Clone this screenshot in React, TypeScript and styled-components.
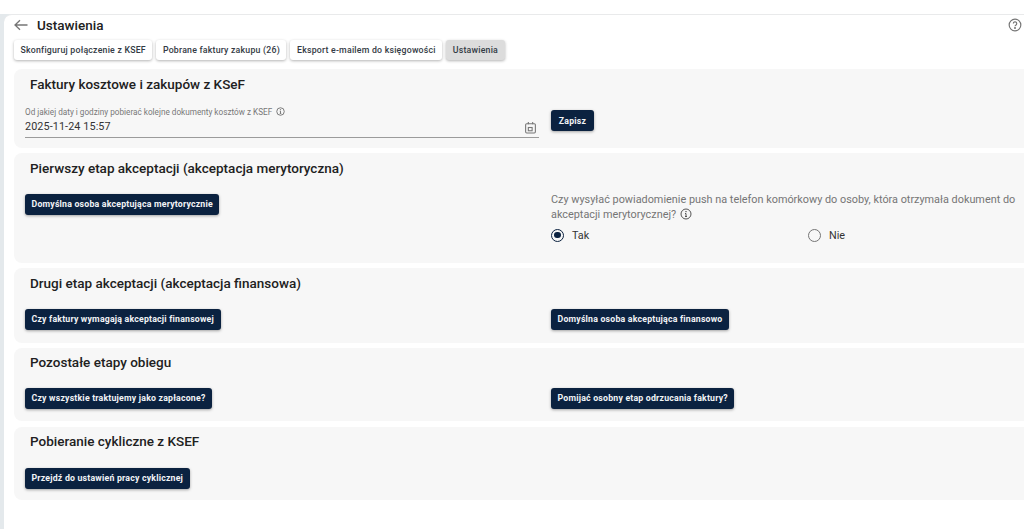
import React from "react";
import styled, { createGlobalStyle } from "styled-components";

const Global = createGlobalStyle`
  html, body { margin: 0; padding: 0; background: #fff; }
  body { font-family: Roboto, "Liberation Sans", sans-serif; color: #212121; overflow: hidden; }
`;
const Page = styled.div`
  height: 529px;
  padding-top: 14px;
  box-sizing: border-box;
  background: #fff;
  overflow: hidden;
`;
const Frame = styled.div`
  height: 515px;
  background: #e4e9ec;
  display: flex;
`;
const Main = styled.main`
  flex: 1;
  margin-left: 4px;
  background: #fff;
  border-top: 1px solid #e9eaeb;
  border-top-left-radius: 8px;
  padding-left: 10px;
  min-width: 0;
`;
const TitleRow = styled.div`
  height: 20px;
  display: flex;
  align-items: center;
  padding-right: 2px;
`;
const BackIcon = styled.svg`
  width: 14px;
  height: 14px;
  margin-right: 9px;
  color: #757575;
`;
const Title = styled.h1`
  flex: 1;
  margin: 0;
  font-size: 13.5px;
  font-weight: 500;
  color: #212121;
`;
const HelpIcon = styled.svg`
  width: 14px;
  height: 14px;
  color: #757575;
`;
const Tabs = styled.div`
  display: flex;
  gap: 4px;
  margin-top: 5px;
  height: 20px;
`;
const Tab = styled.div<{ $active?: boolean }>`
  height: 20px;
  padding: 0 6.5px;
  display: flex;
  align-items: center;
  border-radius: 3px;
  background: ${(p) => (p.$active ? "#dcdcdc" : "#fff")};
  box-shadow: 0 1px 3px rgba(0, 0, 0, 0.3);
  font-size: 8.75px;
  font-weight: 500;
  letter-spacing: 0.22px;
  color: #333a44;
  white-space: nowrap;
`;
const Sections = styled.div`
  margin-top: 9px;
  display: flex;
  flex-direction: column;
`;
const Card = styled.section<{ $h: number; $gap?: number; $pt?: number }>`
  height: ${(p) => p.$h}px;
  margin-bottom: ${(p) => p.$gap ?? 5}px;
  box-sizing: border-box;
  background: #f7f7f7;
  border-radius: 8px 0 0 8px;
  padding: ${(p) => p.$pt ?? 7}px 0 0 11px;
`;
const CardTitle = styled.h2`
  margin: 0 0 0 5px;
  font-size: 13.5px;
  line-height: 16px;
  font-weight: 500;
  color: #212121;
`;
const Columns = styled.div<{ $mt: number }>`
  display: grid;
  grid-template-columns: 526px 1fr;
  margin-top: ${(p) => p.$mt}px;
`;
const Button = styled.button`
  display: inline-flex;
  align-items: center;
  justify-content: center;
  height: 21px;
  min-width: 43px;
  padding: 0 6.5px;
  border: 0;
  border-radius: 3px;
  background: #0b2240;
  color: #f2f4f7;
  font-family: inherit;
  font-size: 8.75px;
  font-weight: 700;
  letter-spacing: 0.2px;
  white-space: nowrap;
  box-shadow: 0 1px 3px rgba(0, 0, 0, 0.35);
`;
const DateRow = styled.div`
  display: flex;
  align-items: flex-start;
  margin-top: 13px;
`;
const Field = styled.div`
  width: 514px;
  margin-right: 12px;
  height: 32px;
  border-bottom: 1px solid #9b9b9b;
  position: relative;
`;
const FieldLabel = styled.div`
  display: flex;
  align-items: center;
  gap: 3px;
  height: 13px;
  font-size: 8.2px;
  color: #777;
`;
const FieldValue = styled.div`
  font-size: 10.8px;
  line-height: 14px;
  color: #333;
  margin-top: 2px;
  letter-spacing: 0.1px;
`;
const CalendarIcon = styled.svg`
  position: absolute;
  right: 2px;
  bottom: 3px;
  width: 13px;
  height: 13px;
  color: #777;
`;
const SaveWrap = styled.div`
  display: flex;
  margin-top: 5px;
`;
const InfoIcon = styled.svg<{ $s: number }>`
  width: ${(p) => p.$s}px;
  height: ${(p) => p.$s}px;
  color: #555;
  vertical-align: -2px;
  margin-left: 1px;
`;
const Question = styled.div`
  font-size: 10.86px;
  line-height: 15px;
  color: #757575;
  width: 472px;
`;
const Radios = styled.div`
  display: grid;
  grid-template-columns: 257px 1fr;
  margin-top: 5px;
`;
const RadioItem = styled.label`
  display: flex;
  align-items: center;
  gap: 8px;
  font-size: 10.8px;
  color: #333;
  height: 16px;
`;
const RadioCircle = styled.span<{ $on?: boolean }>`
  width: 13px;
  height: 13px;
  box-sizing: border-box;
  border-radius: 50%;
  border: 1.5px solid ${(p) => (p.$on ? "#0b2240" : "#757575")};
  display: flex;
  align-items: center;
  justify-content: center;
  &::after {
    content: "";
    display: ${(p) => (p.$on ? "block" : "none")};
    width: 6.5px;
    height: 6.5px;
    border-radius: 50%;
    background: #0b2240;
  }
`;

const Info = ({ s }: { s: number }) => (
  <InfoIcon $s={s} viewBox="0 0 24 24" fill="none" stroke="currentColor" strokeWidth="2">
    <circle cx="12" cy="12" r="10" />
    <path d="M12 11v6M10 17h4M10 11h2" />
    <circle cx="12" cy="7.5" r="0.6" fill="currentColor" />
  </InfoIcon>
);

export default function App() {
  return (
    <>
      <Global />
      <Page>
        <Frame>
          <Main>
            <TitleRow>
              <BackIcon viewBox="0 0 14 14" fill="none" stroke="currentColor" strokeWidth="1.3">
                <path d="M13.5 7H1M6 2.2 1 7l5 4.8" />
              </BackIcon>
              <Title>Ustawienia</Title>
              <HelpIcon viewBox="0 0 24 24" fill="none" stroke="currentColor" strokeWidth="2">
                <circle cx="12" cy="12" r="10" />
                <path d="M9.2 9.5a2.9 2.9 0 1 1 4.5 2.4c-1 .7-1.7 1.2-1.7 2.4" />
                <circle cx="12" cy="17.3" r="0.7" fill="currentColor" />
              </HelpIcon>
            </TitleRow>
            <Tabs>
              <Tab>Skonfiguruj połączenie z KSEF</Tab>
              <Tab>Pobrane faktury zakupu (26)</Tab>
              <Tab>Eksport e-mailem do księgowości</Tab>
              <Tab $active>Ustawienia</Tab>
            </Tabs>
            <Sections>
              <Card $h={79}>
                <CardTitle>Faktury kosztowe i zakupów z KSeF</CardTitle>
                <DateRow>
                  <Field>
                    <FieldLabel>
                      Od jakiej daty i godziny pobierać kolejne dokumenty kosztów z KSEF <Info s={9} />
                    </FieldLabel>
                    <FieldValue>2025-11-24 15:57</FieldValue>
                    <CalendarIcon viewBox="0 0 24 24" fill="none" stroke="currentColor" strokeWidth="2">
                      <rect x="3" y="5" width="18" height="17" rx="2" />
                      <path d="M8 2v4M16 2v4" />
                      <rect x="8" y="12" width="7" height="6" />
                    </CalendarIcon>
                  </Field>
                  <SaveWrap>
                    <Button>Zapisz</Button>
                  </SaveWrap>
                </DateRow>
              </Card>
              <Card $h={110}>
                <CardTitle>Pierwszy etap akceptacji (akceptacja merytoryczna)</CardTitle>
                <Columns $mt={16}>
                  <div>
                    <Button>Domyślna osoba akceptująca merytorycznie</Button>
                  </div>
                  <div>
                    <Question>
                      Czy wysyłać powiadomienie push na telefon komórkowy do osoby, która otrzymała dokument do akceptacji merytorycznej? <Info s={12} />
                    </Question>
                    <Radios>
                      <RadioItem>
                        <RadioCircle $on />
                        Tak
                      </RadioItem>
                      <RadioItem>
                        <RadioCircle />
                        Nie
                      </RadioItem>
                    </Radios>
                  </div>
                </Columns>
              </Card>
              <Card $h={75}>
                <CardTitle>Drugi etap akceptacji (akceptacja finansowa)</CardTitle>
                <Columns $mt={16}>
                  <div>
                    <Button>Czy faktury wymagają akceptacji finansowej</Button>
                  </div>
                  <div>
                    <Button>Domyślna osoba akceptująca finansowo</Button>
                  </div>
                </Columns>
              </Card>
              <Card $h={73} $gap={6} $pt={6}>
                <CardTitle>Pozostałe etapy obiegu</CardTitle>
                <Columns $mt={16}>
                  <div>
                    <Button>Czy wszystkie traktujemy jako zapłacone?</Button>
                  </div>
                  <div>
                    <Button>Pomijać osobny etap odrzucania faktury?</Button>
                  </div>
                </Columns>
              </Card>
              <Card $h={73} $pt={6}>
                <CardTitle>Pobieranie cykliczne z KSEF</CardTitle>
                <Columns $mt={17}>
                  <div>
                    <Button>Przejdź do ustawień pracy cyklicznej</Button>
                  </div>
                </Columns>
              </Card>
            </Sections>
          </Main>
        </Frame>
      </Page>
    </>
  );
}
